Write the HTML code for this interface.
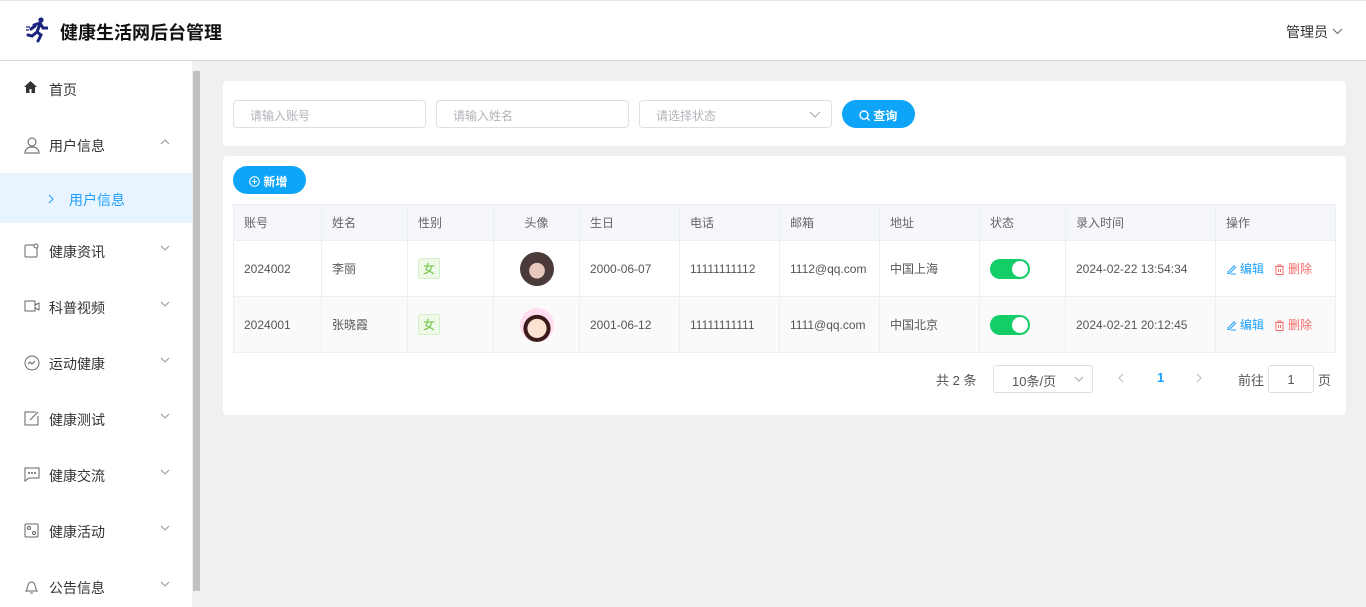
<!DOCTYPE html>
<html><head><meta charset="utf-8"><style>
*{box-sizing:border-box;margin:0;padding:0}
html,body{width:1366px;height:607px;overflow:hidden}
body{font-family:"Liberation Sans","Noto Sans CJK SC",sans-serif;background:#f0f0f0;position:relative;font-size:13px;color:#333}
.hdr{position:absolute;left:0;top:0;width:1366px;height:61px;background:#fff;border-top:1px solid #e5e5e5;border-bottom:1px solid #d8d8d8}
.title{position:absolute;left:60px;top:18px;font-size:18px;font-weight:bold;color:#111}
.admin{position:absolute;left:1286px;top:21px;font-size:14px;color:#333}
.side{position:absolute;left:0;top:61px;width:192px;height:546px;background:#fff}
.sb{position:absolute;left:192px;top:61px;width:9px;height:546px;background:#f1f1f1}
.sb i{position:absolute;left:1px;top:10px;width:7px;height:520px;background:#c1c1c1}
.mi{position:absolute;left:0;width:192px;height:56px;font-size:14px;color:#333}
.mi span{position:absolute;left:49px;top:19px}
.mi svg{position:absolute;left:24px;top:20px}
.mi .ar{position:absolute;left:160px;top:22px}
.card{position:absolute;background:#fff;border-radius:4px}
.inp{position:absolute;top:100px;height:28px;border:1px solid #dcdfe6;border-radius:4px;background:#fff;color:#b0b3b8;font-size:12px;padding:6px 16px}
.btn{position:absolute;background:#0ea5f9;color:#fff;border-radius:14px;font-size:12px;font-weight:bold}
table{position:absolute;left:233px;top:204px;width:1103px;border-collapse:collapse;font-size:12px;color:#555}
td,th{border:1px solid #ebeef5;padding:0 10px;text-align:left}
th{height:36px;background:#f5f7fa;font-weight:normal;color:#666;font-size:12px}
td{height:56px}
tr.s td{background:#fafafa}
.tag{display:inline-block;border:1px solid #d4f0c8;background:#eef9e8;color:#67c23a;padding:1px 4px;font-size:12px;border-radius:2px}
.sw{display:inline-block;width:40px;height:20px;border-radius:10px;background:#13ce66;position:relative;vertical-align:middle}
.sw i{position:absolute;right:2px;top:2px;width:16px;height:16px;border-radius:50%;background:#fff}
.av{display:inline-block;width:34px;height:34px;border-radius:50%;vertical-align:middle}
.ed{color:#1e9fff}.dl{color:#f56c6c}
.ed svg,.dl svg{vertical-align:-2px;margin-right:3px}
</style></head><body>
<div class="hdr">
<svg style="position:absolute;left:26px;top:16px" width="22" height="26" viewBox="0 0 22 26"><circle cx="15" cy="3" r="2.6" fill="#1a237e"/><path d="M8 8 L14 6 L17 11 L21 11 M14 7 L11 15 L15 18 L12 24 M11 15 L6 19 L2 18 M9 9 L5 12" stroke="#1a237e" stroke-width="3" fill="none" stroke-linecap="round"/><path d="M0 10h4M0 13h3" stroke="#1a237e" stroke-width="1.2"/></svg>
<div class="title">健康生活网后台管理</div>
<div class="admin">管理员 <svg width="11" height="7" viewBox="0 0 11 7" style="vertical-align:2px"><path d="M1 1L5.5 5.5L10 1" stroke="#666" fill="none"/></svg></div>
</div>
<div class="side">
<div class="mi" style="top:0"><svg width="13" height="12" viewBox="0 0 13 12"><path d="M6.5 0L0 6h2v6h3.5V8h2v4H11V6h2z" fill="#333"/></svg><span>首页</span></div>
<div class="mi" style="top:56px"><svg width="16" height="17" viewBox="0 0 16 17"><circle cx="8" cy="5" r="4" fill="none" stroke="#777" stroke-width="1.2"/><path d="M1 16c0-4 3-6 7-6s7 2 7 6z" fill="none" stroke="#777" stroke-width="1.2"/></svg><span>用户信息</span><svg class="ar" width="10" height="6" viewBox="0 0 10 6"><path d="M1 5L5 1L9 5" stroke="#999" fill="none"/></svg></div>
<div class="mi" style="top:112px;height:50px;background:#e8f4ff;color:#1e9fff"><span style="left:69px;top:17px">用户信息</span><svg style="left:48px;top:21px" width="6" height="10" viewBox="0 0 6 10"><path d="M1 1L5 5L1 9" stroke="#1e9fff" fill="none"/></svg></div>
<div class="mi" style="top:162px"><svg width="15" height="15"><rect x="1" y="2" width="12" height="12" rx="1" fill="none" stroke="#666"/><circle cx="12" cy="3" r="2" fill="#fff" stroke="#666"/></svg><span>健康资讯</span><svg class="ar" width="10" height="6" viewBox="0 0 10 6"><path d="M1 1L5 5L9 1" stroke="#999" fill="none"/></svg></div>
<div class="mi" style="top:218px"><svg width="16" height="14"><rect x="1" y="2" width="10" height="10" fill="none" stroke="#666"/><path d="M11 6l4-2v7l-4-2" fill="none" stroke="#666"/></svg><span>科普视频</span><svg class="ar" width="10" height="6" viewBox="0 0 10 6"><path d="M1 1L5 5L9 1" stroke="#999" fill="none"/></svg></div>
<div class="mi" style="top:274px"><svg width="16" height="16"><circle cx="8" cy="8" r="7" fill="none" stroke="#666"/><path d="M4 9l2-2 2 2 3-3" stroke="#666" fill="none"/></svg><span>运动健康</span><svg class="ar" width="10" height="6" viewBox="0 0 10 6"><path d="M1 1L5 5L9 1" stroke="#999" fill="none"/></svg></div>
<div class="mi" style="top:330px"><svg width="15" height="15"><path d="M12 1H1v13h13V5" fill="none" stroke="#666"/><path d="M6 9l8-8" stroke="#666"/></svg><span>健康测试</span><svg class="ar" width="10" height="6" viewBox="0 0 10 6"><path d="M1 1L5 5L9 1" stroke="#999" fill="none"/></svg></div>
<div class="mi" style="top:386px"><svg width="16" height="15"><path d="M1 1h14v10H5l-4 3z" fill="none" stroke="#666"/><circle cx="5" cy="6" r="1" fill="#666"/><circle cx="8" cy="6" r="1" fill="#666"/><circle cx="11" cy="6" r="1" fill="#666"/></svg><span>健康交流</span><svg class="ar" width="10" height="6" viewBox="0 0 10 6"><path d="M1 1L5 5L9 1" stroke="#999" fill="none"/></svg></div>
<div class="mi" style="top:442px"><svg width="15" height="15"><rect x="1" y="1" width="13" height="13" rx="1" fill="none" stroke="#666"/><circle cx="5" cy="5" r="1.5" fill="none" stroke="#666"/><circle cx="10" cy="10" r="1.5" fill="none" stroke="#666"/></svg><span>健康活动</span><svg class="ar" width="10" height="6" viewBox="0 0 10 6"><path d="M1 1L5 5L9 1" stroke="#999" fill="none"/></svg></div>
<div class="mi" style="top:498px"><svg width="15" height="16"><path d="M2 12c2-2 1-9 5.5-9S11 10 13 12z M6 14h3" fill="none" stroke="#666"/></svg><span>公告信息</span><svg class="ar" width="10" height="6" viewBox="0 0 10 6"><path d="M1 1L5 5L9 1" stroke="#999" fill="none"/></svg></div>
</div>
<div class="sb"><i></i></div>
<div class="card" style="left:223px;top:81px;width:1123px;height:65px"></div>
<div class="inp" style="left:233px;width:193px">请输入账号</div>
<div class="inp" style="left:436px;width:193px">请输入姓名</div>
<div class="inp" style="left:639px;width:193px">请选择状态<svg style="position:absolute;right:10px;top:10px" width="12" height="7" viewBox="0 0 12 7"><path d="M1 1L6 6L11 1" stroke="#aaa" fill="none"/></svg></div>
<div class="btn" style="left:842px;top:100px;width:73px;height:28px;padding:7px 0 0 17px"><svg width="11" height="11" viewBox="0 0 11 11" style="vertical-align:-1px"><circle cx="5" cy="5" r="4" stroke="#fff" stroke-width="1.4" fill="none"/><path d="M8 8l2.5 2.5" stroke="#fff" stroke-width="1.4"/></svg> 查询</div>
<div class="card" style="left:223px;top:156px;width:1123px;height:259px"></div>
<div class="btn" style="left:233px;top:166px;width:73px;height:28px;padding:7px 0 0 16px"><svg width="11" height="11" viewBox="0 0 11 11" style="vertical-align:-1px"><circle cx="5.5" cy="5.5" r="4.8" stroke="#fff" fill="none"/><path d="M5.5 3v5M3 5.5h5" stroke="#fff"/></svg> 新增</div>
<table>
<tr><th style="width:88px">账号</th><th style="width:86px">姓名</th><th style="width:86px">性别</th><th style="width:86px;text-align:center">头像</th><th style="width:100px">生日</th><th style="width:100px">电话</th><th style="width:100px">邮箱</th><th style="width:100px">地址</th><th style="width:86px">状态</th><th style="width:150px">录入时间</th><th>操作</th></tr>
<tr><td>2024002</td><td>李丽</td><td><span class="tag">女</span></td><td style="text-align:center"><span class="av" style="background:radial-gradient(circle at 50% 55%,#e9c9bd 30%,#4a3a3a 32%)"></span></td><td>2000-06-07</td><td>11111111112</td><td>1112@qq.com</td><td>中国上海</td><td><span class="sw"><i></i></span></td><td>2024-02-22 13:54:34</td><td><span class="ed"><svg width="11" height="11" viewBox="0 0 11 11"><path d="M2 8L8 2l1.5 1.5-6 6H2z M5 10h5" stroke="#1e9fff" fill="none"/></svg>编辑</span>&nbsp;&nbsp;&nbsp;<span class="dl"><svg width="11" height="11" viewBox="0 0 11 11"><path d="M1 2.5h9M4 2.5V1h3v1.5M2 2.5v8h7v-8M4.5 5v3M6.5 5v3" stroke="#f56c6c" fill="none"/></svg>删除</span></td></tr>
<tr class="s"><td>2024001</td><td>张晓霞</td><td><span class="tag">女</span></td><td style="text-align:center"><span class="av" style="background:radial-gradient(circle at 50% 60%,#fbe1d0 35%,#3a1a1a 37%,#3a1a1a 50%,#fde 52%)"></span></td><td>2001-06-12</td><td>11111111111</td><td>1111@qq.com</td><td>中国北京</td><td><span class="sw"><i></i></span></td><td>2024-02-21 20:12:45</td><td><span class="ed"><svg width="11" height="11" viewBox="0 0 11 11"><path d="M2 8L8 2l1.5 1.5-6 6H2z M5 10h5" stroke="#1e9fff" fill="none"/></svg>编辑</span>&nbsp;&nbsp;&nbsp;<span class="dl"><svg width="11" height="11" viewBox="0 0 11 11"><path d="M1 2.5h9M4 2.5V1h3v1.5M2 2.5v8h7v-8M4.5 5v3M6.5 5v3" stroke="#f56c6c" fill="none"/></svg>删除</span></td></tr>
</table>
<div style="position:absolute;left:936px;top:370px;font-size:13px;color:#555">共 2 条</div>
<div style="position:absolute;left:993px;top:365px;width:100px;height:28px;border:1px solid #dcdfe6;border-radius:3px;font-size:13px;color:#555;padding:5px 0 0 18px">10条/页<svg style="position:absolute;right:8px;top:10px" width="10" height="6" viewBox="0 0 10 6"><path d="M1 1L5 5L9 1" stroke="#aaa" fill="none"/></svg></div>
<svg style="position:absolute;left:1118px;top:373px" width="6" height="10" viewBox="0 0 6 10"><path d="M5 1L1 5L5 9" stroke="#bbb" fill="none"/></svg>
<div style="position:absolute;left:1157px;top:370px;color:#1e9fff;font-weight:bold">1</div>
<svg style="position:absolute;left:1196px;top:373px" width="6" height="10" viewBox="0 0 6 10"><path d="M1 1L5 5L1 9" stroke="#bbb" fill="none"/></svg>
<div style="position:absolute;left:1238px;top:370px;color:#555">前往</div>
<div style="position:absolute;left:1268px;top:365px;width:46px;height:28px;border:1px solid #dcdfe6;border-radius:3px;text-align:center;padding-top:6px;color:#555">1</div>
<div style="position:absolute;left:1318px;top:370px;color:#555">页</div>
</body></html>
